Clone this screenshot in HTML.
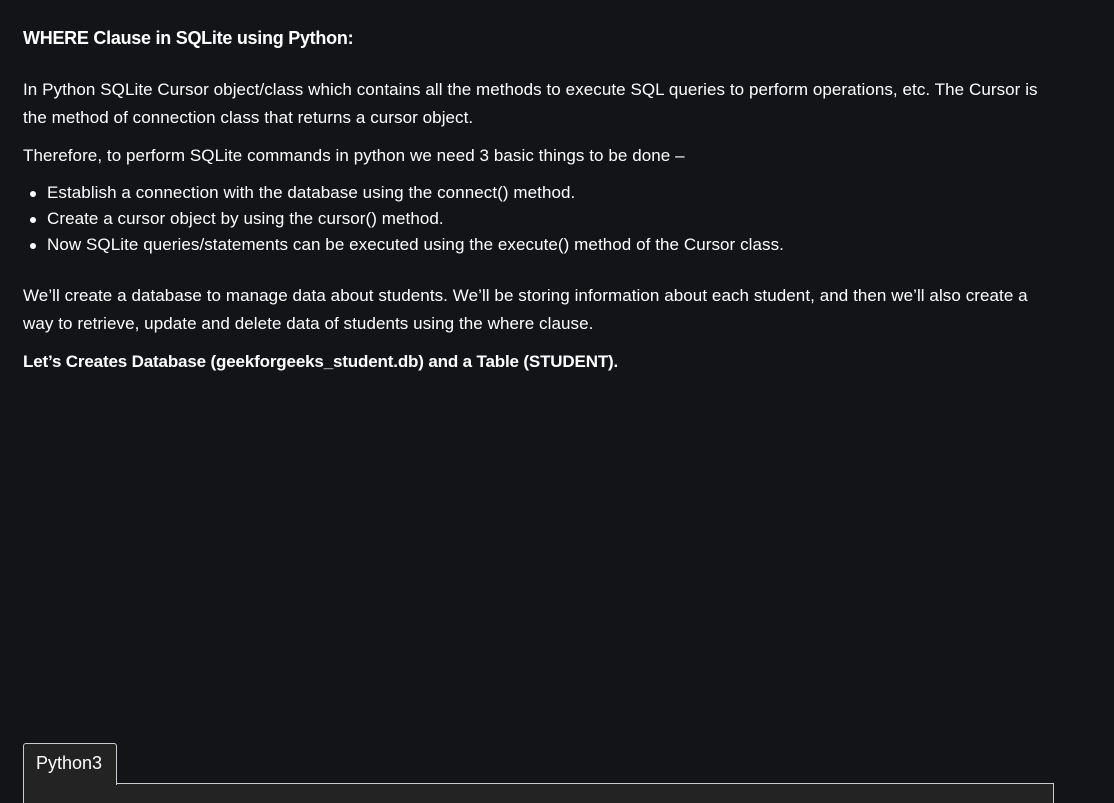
<!DOCTYPE html>
<html><head><meta charset="utf-8"><style>
body{margin:0;background:#131417;color:#fff;font-family:"Liberation Sans",sans-serif;width:1114px;height:798px;overflow:hidden;position:relative}
.t{position:absolute;left:23px;font-size:17px;white-space:nowrap;letter-spacing:0.07px;line-height:28px}
.li{left:47px}
.dot{position:absolute;left:30px;width:6px;height:6px;border-radius:50%;background:#fff}
</style></head><body>
<div class="t" style="top:24px;font-size:18px;font-weight:bold;letter-spacing:-0.27px">WHERE Clause in SQLite using Python:</div>
<div class="t" style="top:76px">In Python SQLite Cursor object/class which contains all the methods to execute SQL queries to perform operations, etc. The Cursor is</div>
<div class="t" style="top:104px">the method of connection class that returns a cursor object.</div>
<div class="t" style="top:142px">Therefore, to perform SQLite commands in python we need 3 basic things to be done –</div>
<div class="dot" style="top:191px"></div><div class="t li" style="top:179px">Establish a connection with the database using the connect() method.</div>
<div class="dot" style="top:217px"></div><div class="t li" style="top:205px">Create a cursor object by using the cursor() method.</div>
<div class="dot" style="top:243px"></div><div class="t li" style="top:231px">Now SQLite queries/statements can be executed using the execute() method of the Cursor class.</div>
<div class="t" style="top:282px">We’ll create a database to manage data about students. We’ll be storing information about each student, and then we’ll also create a</div>
<div class="t" style="top:310px">way to retrieve, update and delete data of students using the where clause.</div>
<div class="t" style="top:348px;font-weight:bold;letter-spacing:-0.16px">Let’s Creates Database (geekforgeeks_student.db) and a Table (STUDENT).</div>
<div style="position:absolute;left:23px;top:783px;width:1031px;height:20px;background:#232323;border:1px solid #ccc;border-bottom:none;box-sizing:border-box"></div>
<div style="position:absolute;left:23px;top:743px;width:94px;height:42px;background:#232323;border:1px solid #ccc;border-bottom:none;border-radius:3px 3px 0 0;box-sizing:border-box;font-size:18px;padding:9px 0 0 12px">Python3</div>
</body></html>
